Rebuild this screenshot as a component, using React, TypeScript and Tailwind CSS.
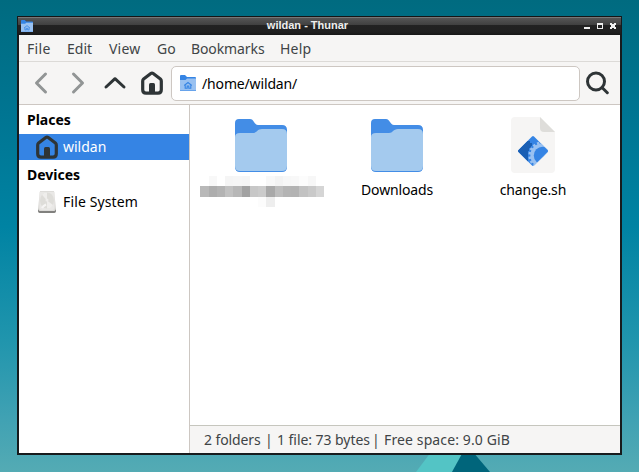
import React from 'react';

const mosaicWidths = [9, 8, 8, 8, 9, 8, 8, 8, 9, 8, 8, 8, 9, 8, 8];
const mosaicTop = ['#fff', '#f8f8f8', '#fff', '#f5f5f5', '#f6f6f6', '#f5f5f5', '#fff', '#fff', '#f8f8f8', '#f3f3f3', '#f7f7f7', '#f8f8f8', '#fcfcfc', '#f7f7f7', '#fff'];
const mosaicMain = ['#b8b8b8', '#adadad', '#b3b3b3', '#c1c1c1', '#b7b7b7', '#a2a2a2', '#c7c7c7', '#cbcbcb', '#a9a9a9', '#bdbdbd', '#b4b4b4', '#b3b3b3', '#c2c2c2', '#c9c9c9', '#d5d5d5'];
const mosaicBottom = ['#fff', '#fff', '#fff', '#fff', '#fff', '#fff', '#fff', '#fcfcfc', '#eeeeee', '#fff', '#fff', '#fff', '#fff', '#fff', '#fff'];

function MosaicRow({ colors, height }: { colors: string[]; height: string }) {
  return (
    <div className={`flex ${height}`}>
      {colors.map((c, i) => (
        <span key={i} style={{ width: mosaicWidths[i], background: c }} />
      ))}
    </div>
  );
}

function Folder() {
  return (
    <svg width="52" height="53" viewBox="0 0 52 53">
      <path d="M4 0H15C19 0 19 6 23 6H47Q52 6 52 11V48Q52 53 47 53H5Q0 53 0 48V4Q0 0 4 0Z" fill="#438de6" />
      <path d="M5 14H18C22 14 22 10 27 10H47Q52 10 52 15V47Q52 52 47 52H5Q0 52 0 47V18Q0 14 5 14Z" fill="#a4caee" />
    </svg>
  );
}

function House({ className = '' }: { className?: string }) {
  return (
    <svg width="22" height="24" viewBox="0 0 22 24" className={className}>
      <path d="M1.700 10Q1.700 8.800 2.600 8L9.800 2.500Q11 1.600 12.200 2.500L19.400 8Q20.300 8.800 20.300 10V18.800Q20.300 22.200 17 22.200H5Q1.700 22.200 1.700 18.800Z" fill="none" stroke="#2e3436" strokeWidth="3.200" strokeLinejoin="round" />
      <path d="M8 22V13.500Q8 12 9.500 12H12.500Q14 12 14 13.500V22Z" fill="#2e3436" />
    </svg>
  );
}

function HomeFolder({ size }: { size: number }) {
  return (
    <svg width={size} height={size} viewBox="0 0 16 16" className="shrink-0">
      <path d="M0 1Q0 0 1 0H5L7 2H15Q16 2 16 3V16H0Z" fill="#3584e4" />
      <path d="M0 5H5.500L7 3.500H16V15.500H0Z" fill="#99c1f1" />
      <path d="M4.200 10.500L8 7.500L11.800 10.500M5.200 10V13.200H7.200V11H8.800V13.200H10.800V10" fill="none" stroke="#3584e4" strokeWidth="1.100" />
    </svg>
  );
}

function Gear() {
  return (
    <g>
      {Array.from({ length: 18 }, (_, i) => (
        <rect key={i} x="30.400" y="24.300" width="2.400" height="14" fill="#99c1f1" transform={`rotate(${i * 20} 31.6 38.500)`} />
      ))}
      <circle cx="31.6" cy="38.5" r="12.200" fill="#99c1f1" />
      <circle cx="31.6" cy="38.5" r="8.800" fill="#3584e4" />
    </g>
  );
}

function ScriptFile() {
  return (
    <svg width="44" height="56" viewBox="0 0 44 56">
      <path d="M4 0H29L44 15V52Q44 56 40 56H4Q0 56 0 52V4Q0 0 4 0Z" fill="#f6f5f4" />
      <path d="M29 0L44 15H33Q29 15 29 11Z" fill="#deddda" />
      <clipPath id="diamond"><path d="M21 19.500Q22 18.500 23 19.500L36.500 33Q37.500 34 36.500 35L23 48.500Q22 49.500 21 48.500L7.500 35Q6.500 34 7.500 33Z" /></clipPath>
      <g clipPath="url(#diamond)">
        <rect width="44" height="56" fill="#3584e4" />
        <path d="M6 34L16 24H19V26H21V29H20V31H18V34H17V50H6Z" fill="#1a5fb4" />
        <Gear />
      </g>
    </svg>
  );
}

function Drive() {
  return (
    <svg width="18" height="22" viewBox="0 0 18 22">
      <path d="M0 17H18V20Q18 22 16 22H2Q0 22 0 20Z" fill="#777674" />
      <path d="M2 0H16L18 17Q18 20 16 20H2Q0 20 0 17Z" fill="#deddda" />
      <path d="M1.500 1H16.500V17Q16.500 19 14.500 19H3.500Q1.500 19 1.500 17Z" fill="#e9e8e6" />
      <ellipse cx="9" cy="9.500" rx="7" ry="8" fill="#deddd9" />
      <path d="M9 9.500L4 3.800A7 8 0 0 1 9 1.500ZM9 9.500L15 14A7 8 0 0 1 9 17.500Z" fill="#efeeec" />
      <path d="M4 17Q5 15 8 13.500" stroke="#f6f5f4" strokeWidth="2" fill="none" />
      <circle cx="9" cy="9" r="1.500" fill="#efeeec" />
      <path d="M1 21H17" stroke="#8c8b88" strokeWidth="1" />
    </svg>
  );
}

const menus = [
  { label: 'File', box: 'w-[40px] tracking-[0.3px]' },
  { label: 'Edit', box: 'w-[42px]' },
  { label: 'View', box: 'w-[48px] tracking-[0.2px]' },
  { label: 'Go', box: 'w-[34px]' },
  { label: 'Bookmarks', box: 'w-[89px] tracking-[-0.1px]' },
  { label: 'Help', box: 'w-[40px] tracking-[0.2px]' },
];

export default function App() {
  return (
    <div className="relative h-[472px] w-[639px] overflow-hidden bg-[linear-gradient(180deg,#006b80_0%,#007592_24%,#0083a3_48%,#2095ad_72%,#3fa1b3_88%,#54abb4_100%)] pl-[17px] pt-[16px] font-['Noto_Sans',sans-serif] text-[14px]">
      <svg className="absolute left-0 top-[452px]" width="639" height="20" viewBox="0 452 639 20">
        <path d="M431 452H463L452 472H416Z" fill="#53c4c5" />
        <path d="M463 452H473L490 472H452Z" fill="#00657b" />
      </svg>
      <div className="relative flex h-[439px] w-[605px] flex-col bg-[#171b1d] px-[2px] pb-[2px]">
        <header className="-mx-px flex h-[19px] shrink-0 items-center border-t border-[#151515] bg-[linear-gradient(180deg,#777_0,#777_1px,#555_1px,#404040_8px,#222_8px,#202020_15px,#171717_18px)] pl-[3px] pr-[4px]">
          <HomeFolder size={12} />
          <div className="flex-1 pb-[2px] pr-[9px] pl-[7px] text-center font-['Liberation_Sans',sans-serif] text-[11px] font-bold leading-[16px] text-[#eee]">wildan - Thunar</div>
          <svg width="32" height="6" viewBox="0 0 32 6" shapeRendering="crispEdges" className="mr-px -mt-px shrink-0">
            <path d="M0 4H6V6H0ZM13 0H19V6H13ZM26 0H28V1H30V0H32V2H31V4H32V6H30V5H28V6H26V4H27V2H26Z" fill="#eee" />
            <path d="M14 2H18V5H14Z" fill="#222" />
          </svg>
        </header>
        <nav className="flex h-[27px] shrink-0 items-center border-b border-[#dcdad7] bg-[#f6f5f4] pl-[8px] text-[#3f4446]">
          {menus.map((m) => <span key={m.label} className={m.box}>{m.label}</span>)}
        </nav>
        <div className="flex h-[43px] shrink-0 items-center border-b border-[#cdc7c2] bg-[#f6f5f4] pl-[15px] pr-[11px]">
          <svg width="93" height="24" viewBox="0 0 93 24" fill="none" strokeWidth="3" strokeLinecap="round" strokeLinejoin="round" className="shrink-0">
            <path d="M11.500 3L2.500 12L11.500 21M39.500 3L48.500 12L39.500 21" stroke="#929595" />
            <path d="M72 16L81 7.700L90 16" stroke="#2e3436" />
          </svg>
          <House className="-mt-px ml-[14px] shrink-0" />
          <div className="ml-[8px] flex h-[35px] w-[409px] shrink-0 items-center rounded-[5px] border border-[#cdc7c2] bg-white pl-[8px] text-black">
            <HomeFolder size={16} />
            <span className="ml-[6px] tracking-[-0.15px]">/home/wildan/</span>
          </div>
          <svg width="24" height="24" viewBox="0 0 24 24" className="-mt-px ml-[5px] shrink-0" fill="none" stroke="#2e3436" strokeWidth="3">
            <circle cx="11" cy="10.500" r="8.500" /><path d="M17 16.500L22.300 21.700" strokeLinecap="round" />
          </svg>
        </div>
        <div className="flex min-h-0 flex-1 bg-white">
          <aside className="w-[171px] shrink-0 border-r border-[#cdc7c2] pt-px text-black">
            <h2 className="h-[28px] pl-[8px] font-bold leading-[28px]">Places</h2>
            <div className="flex h-[26px] items-center bg-[#3584e4] pl-[17px] text-white">
              <House /><span className="mb-[2px] ml-[5px]">wildan</span>
            </div>
            <h2 className="h-[28px] pl-[8px] font-bold leading-[30px]">Devices</h2>
            <div className="flex h-[28px] items-center pl-[19px]">
              <Drive /><span className="mb-[2px] ml-[7px] tracking-[0.13px]">File System</span>
            </div>
          </aside>
          <main className="flex min-w-0 flex-1 flex-col">
            <div className="flex flex-1 items-start pl-[3px] text-black">
              <div className="flex w-[136px] flex-col items-center pt-[14px]">
                <Folder />
                <div className="mt-[4px] translate-x-px">
                  <MosaicRow colors={mosaicTop} height="h-[10px]" />
                  <MosaicRow colors={mosaicMain} height="h-[11px]" />
                  <MosaicRow colors={mosaicBottom} height="h-[10px]" />
                </div>
              </div>
              <div className="flex w-[136px] flex-col items-center pt-[14px]">
                <Folder /><span className="mt-[8px] leading-[20px] tracking-[-0.15px]">Downloads</span>
              </div>
              <div className="flex w-[136px] flex-col items-center pt-[12px]">
                <ScriptFile /><span className="mt-[7px] leading-[20px] tracking-[-0.1px]">change.sh</span>
              </div>
            </div>
            <footer className="flex h-[28px] shrink-0 items-center border-t border-[#c6c6be] bg-[#f6f5f4] pl-[14px] text-[#3f4446]">
              <span className="w-[60px] tracking-[-0.1px]">2 folders</span>
              <span className="w-[13px] pl-[1px]">|</span>
              <span className="w-[95px] tracking-[-0.05px]">1 file: 73 bytes</span>
              <span className="w-[12px]">|</span>
              <span className="tracking-[0.12px]">Free space: 9.0 GiB</span>
            </footer>
          </main>
        </div>
      </div>
    </div>
  );
}
